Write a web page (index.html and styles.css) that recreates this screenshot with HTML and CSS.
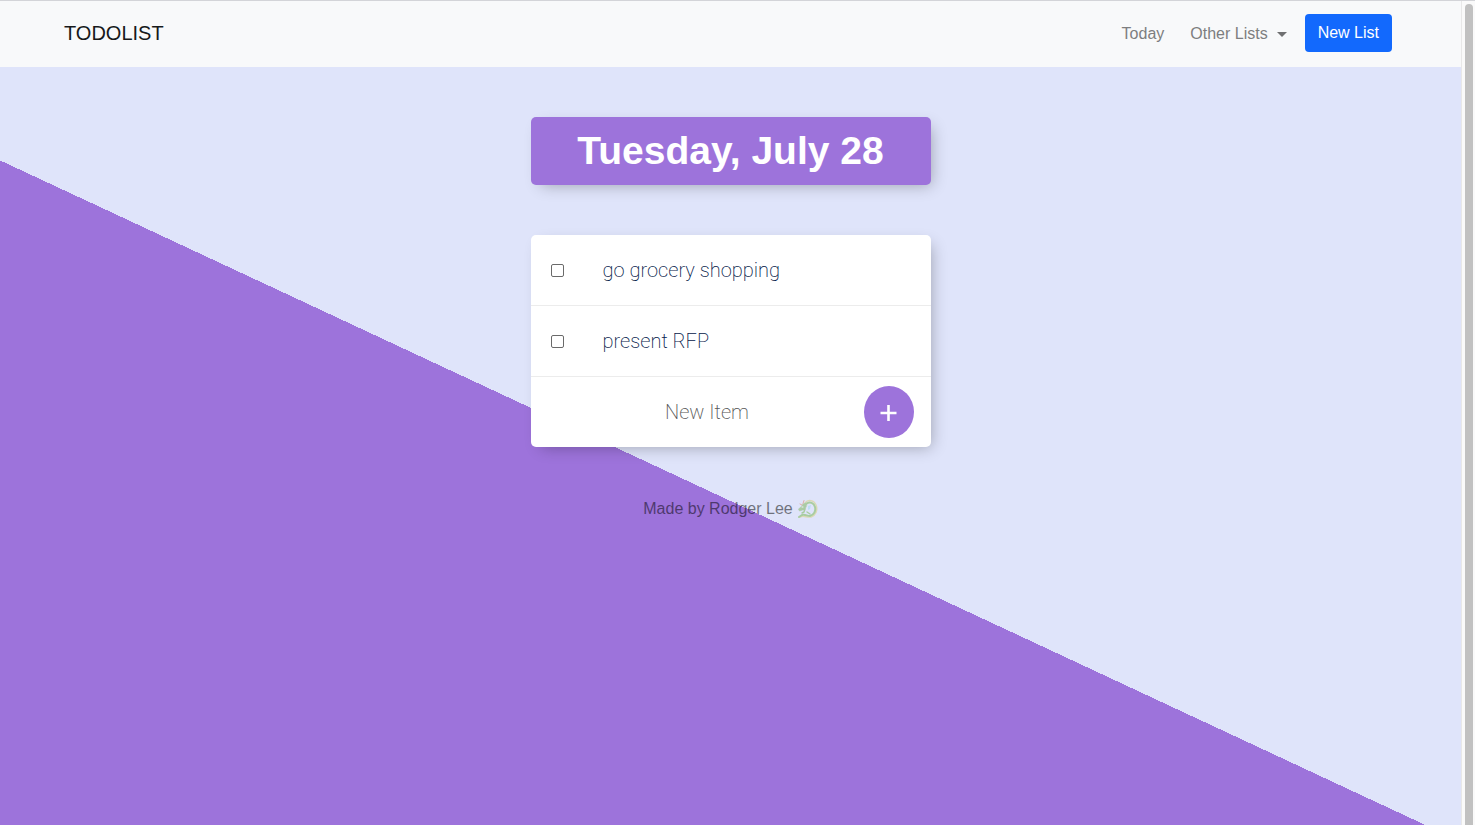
FILE: index.html
```html
<!DOCTYPE html>
<html lang="en">
<head>
<meta charset="utf-8">
<meta name="viewport" content="width=device-width, initial-scale=1">
<title>Todolist</title>
<link rel="stylesheet" href="styles.css">
</head>
<body>
<div class="page">
  <nav class="navbar">
    <a class="brand" href="#">TODOLIST</a>
    <div class="nav-links">
      <a class="nav-link" href="#">Today</a>
      <button class="nav-link dropdown" type="button">Other Lists<span class="caret"></span></button>
      <button class="btn-new" type="button">New List</button>
    </div>
  </nav>
  <main class="content">
    <h1 class="card heading">Tuesday, July 28</h1>
    <div class="card list">
      <label class="item"><input class="check" type="checkbox"><span class="item-text">go grocery shopping</span></label>
      <label class="item"><input class="check" type="checkbox"><span class="item-text">present RFP</span></label>
      <form class="item new-item">
        <input class="new-text" type="text" placeholder="New Item" aria-label="New Item" autocomplete="off">
        <button class="add" type="button" aria-label="Add item">
          <svg width="18" height="18" viewBox="0 0 18 18"><path d="M8.5 2v16M0.5 10h16" stroke="#fff" stroke-width="2.6"/></svg>
        </button>
      </form>
    </div>
  </main>
  <footer class="footer">
    <span>Made by Rodger Lee</span>
    <svg class="dragon" width="20" height="20" viewBox="0 0 20 20" fill="none" stroke-linecap="round" stroke-linejoin="round">
      <path d="M7 4C10 0 16 1 18 6c2 5 0 10-5 12-4 1-7-2-11 0" stroke="#d9cf70" stroke-width="1.4"/>
      <path d="M8 5c4-3 8-1 9 3 1 4-1 8-5 9-3 0-5-2-8-1l-3 2" stroke="#73b648" stroke-width="2"/>
      <path d="M8 4L5 5 3 8 0.5 10l1 2 3-1 2 0 2-4z" fill="#79b351" stroke="#79b351" stroke-width=".6"/>
      <path d="M5 4.500l1-3M4 6L2 5" stroke="#e27b54"/>
      <path d="M7 10l-1 3-2 1M12 15l-3-2" stroke="#73b648" stroke-width="1.4"/>
      <path d="M10 7l3-1-1 4-2 1z" fill="#9ed9ef"/>
      <path d="M4 8h1" stroke="#fff"/>
    </svg>
  </footer>
</div>
<div class="scroll-track" aria-hidden="true"><div class="scroll-thumb"></div></div>
</body>
</html>
```
FILE: styles.css
```css
* {
  box-sizing: border-box;
}

body {
  margin: 0;
  display: flex;
  min-height: 100vh;
  border-top: 1px solid #d3d4d8;
  background: #fafafa;
  font-family: "Liberation Sans", Arial, sans-serif;
  font-size: 16px;
  line-height: 24px;
  color: #212529;
}

button,
input {
  font: inherit;
}

.page {
  flex: 1;
  background: linear-gradient(25deg, #9d73db 50%, #dfe4fa 50%) 0 0 / 100% 1000px;
}

.navbar {
  display: flex;
  align-items: center;
  justify-content: space-between;
  padding: 12px 69px 14px 64px;
  background: #f8f9fa;
}

.brand {
  color: #17191b;
  font-size: 20px;
  line-height: 32px;
  text-decoration: none;
}

.nav-links {
  display: flex;
  align-items: center;
}

.nav-link {
  padding: 9px 0 7px;
  margin-right: 26px;
  border: 0;
  background: none;
  color: #7d7e7f;
  text-decoration: none;
}

.dropdown {
  display: flex;
  align-items: center;
  gap: 9px;
  margin-right: 18px;
}

.caret {
  border: 5px solid transparent;
  border-top-color: #6f7071;
  border-bottom: 0;
}

.btn-new {
  padding: 7px 13px;
  border: 0;
  border-radius: 4px;
  background: #1269fd;
  color: #fff;
}

.content {
  max-width: 400px;
  margin: 50px auto;
}

.card {
  border-radius: 5px;
  box-shadow: 5px 5px 15px -5px rgba(0, 0, 0, 0.3);
}

.heading {
  margin: 0 0 50px;
  padding: 10px;
  background: #9d73db;
  color: #fff;
  font-size: 39px;
  line-height: 48px;
  text-align: center;
}

.list {
  background: #fff;
}

.item {
  display: flex;
  align-items: center;
  height: 71px;
  padding-left: 20px;
  border-bottom: 1px solid #ececec;
}

.check {
  appearance: none;
  width: 13px;
  height: 13px;
  margin: 0 39px 0 0;
  border: 1px solid #6a6a6a;
  border-radius: 2px;
  background: #fff;
}

.check:checked {
  background: #9d73db;
}

.item-text,
.new-text {
  font-family: Roboto, "Open Sans", sans-serif;
  font-size: 20px;
  line-height: 30px;
  font-weight: 200;
  color: #05204a;
}

.new-item {
  height: 70px;
  padding: 0 17px 0 20px;
  border-bottom: 0;
}

.new-text {
  flex: 1;
  min-width: 0;
  padding: 0;
  border: 0;
  outline: 0;
  background: transparent;
  text-align: center;
}

.new-text::placeholder {
  color: #555;
  opacity: 1;
}

.add {
  display: flex;
  align-items: center;
  justify-content: center;
  width: 50px;
  height: 52px;
  padding: 0;
  border: 0;
  border-radius: 50%;
  background: #9d73db;
}

.footer {
  display: flex;
  align-items: center;
  justify-content: center;
  gap: 5px;
  color: #000;
  opacity: 0.5;
}

.scroll-track {
  width: 14px;
  padding: 3px 2px 0 3px;
  border-left: 1px solid #e8e8e8;
  background: #fafafa;
  display: flex;
}

.scroll-thumb {
  flex: 1;
  border-radius: 4px 4px 0 0;
  background: #c1c1c1;
}
```
